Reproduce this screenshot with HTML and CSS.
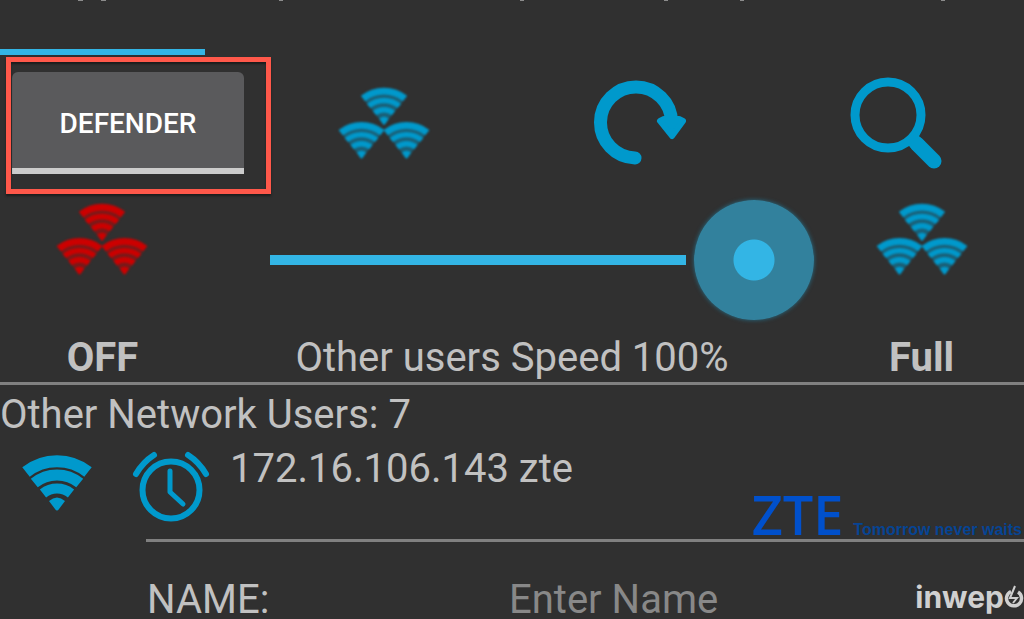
FILE: index.html
```html
<!DOCTYPE html>
<html lang="en">
<head>
<meta charset="utf-8">
<meta name="viewport" content="width=device-width, initial-scale=1">
<title>Network users</title>
<link rel="stylesheet" href="styles.css">
</head>
<body>
<svg class="defs" aria-hidden="true">
  <defs>
    <symbol id="wifi" viewBox="0 0 70 56">
      <g fill="none" stroke="currentColor">
        <path stroke-width="12" d="M4 17A50 50 0 0 1 66 17"/>
        <path stroke-width="11" d="M12.3 28A36 36 0 0 1 57.7 28"/>
        <path stroke-width="10" d="M21 38.5A22.5 22.5 0 0 1 49 38.5"/>
      </g>
      <path fill="currentColor" d="M27 46Q35 39 43 46L37 54Q35 57 33 54Z"/>
    </symbol>
    <symbol id="waves" viewBox="0 0 70 56">
      <g fill="none" stroke="currentColor">
        <path stroke-width="10" d="M4 17A50 50 0 0 1 66 17"/>
        <path stroke-width="8" d="M12.3 28A36 36 0 0 1 57.7 28"/>
        <path stroke-width="8" d="M21 38.5A22.5 22.5 0 0 1 49 38.5"/>
      </g>
      <path fill="currentColor" d="M28 47Q35 41 42 47L37 54Q35 57 33 54Z"/>
    </symbol>
    <symbol id="wedge" viewBox="0 0 70 56">
      <path fill="currentColor" d="M2 14Q35 -9 68 14L35 56Z"/>
    </symbol>
    <symbol id="trefoil" viewBox="0 0 92 74">
      <g opacity=".45">
        <use href="#wedge" x="22" y="1" width="48" height="38"/>
        <use href="#wedge" x="0" y="35" width="47" height="38"/>
        <use href="#wedge" x="45" y="35" width="47" height="38"/>
      </g>
      <use href="#waves" x="22" y="1" width="48" height="38"/>
      <use href="#waves" x="0" y="35" width="47" height="38"/>
      <use href="#waves" x="45" y="35" width="47" height="38"/>
    </symbol>
  </defs>
</svg>
<div class="app">
  <header class="tabs">
    <svg class="tab-edge" viewBox="0 0 1024 2" preserveAspectRatio="none" aria-hidden="true">
      <path stroke="#8c8c8c" stroke-width="2" d="M78 0h5M101 0h5M279 0h4M520 0h4M664 0h4M740 0h4M941 0h4"/>
    </svg>
    <div class="tab-indicator"></div>
  </header>

  <div class="toolbar">
    <div class="cell first">
      <button class="defender" type="button">DEFENDER</button>
      <span class="highlight"></span>
    </div>
    <button class="cell icon-btn" type="button" aria-label="Network">
      <svg class="trefoil"><use href="#trefoil"/></svg>
    </button>
    <button class="cell icon-btn" type="button" aria-label="Refresh">
      <svg class="tool" viewBox="0 0 92 92" fill="none" stroke="currentColor">
        <path stroke-width="13" stroke-linecap="round" d="M41 81A35.500 35.500 0 1 1 77.500 45"/>
        <path fill="currentColor" stroke-width="6" stroke-linejoin="round" d="M66 44L70 42L85 42L89 44L78 59Z"/>
      </svg>
    </button>
    <button class="cell icon-btn" type="button" aria-label="Search">
      <svg class="tool" viewBox="0 0 92 92" fill="none" stroke="currentColor">
        <circle cx="38" cy="38" r="33" stroke-width="9"/>
        <path stroke-width="15" stroke-linecap="round" d="M67 67L84 84"/>
        <path stroke-width="14" d="M61 61L70 70"/>
      </svg>
    </button>
  </div>

  <div class="speed">
    <div class="col">
      <svg class="trefoil red"><use href="#trefoil"/></svg>
      <strong class="caption">OFF</strong>
    </div>
    <div class="col">
      <input class="slider" id="speed" type="range" min="0" max="100" value="100">
      <label class="caption" for="speed">Other users Speed 100%</label>
    </div>
    <div class="col">
      <svg class="trefoil"><use href="#trefoil"/></svg>
      <strong class="caption">Full</strong>
    </div>
  </div>

  <h1 class="heading">Other Network Users: 7</h1>

  <div class="user">
    <svg class="wifi"><use href="#wifi"/></svg>
    <svg class="clock" viewBox="0 0 78 72" fill="none" stroke="currentColor" stroke-width="6">
      <circle cx="39" cy="39" r="28.500" stroke-width="6"/>
      <path stroke-width="5" stroke-linecap="round" stroke-linejoin="round" d="M38 20V41L51 53"/>
      <path stroke-linecap="round" d="M4 23Q11 11 22 4M56 4Q67 11 74 23"/>
    </svg>
    <div class="address">172.16.106.143 zte</div>
    <div class="vendor"><span class="zte">ZTE</span><span class="slogan">Tomorrow never waits</span></div>
  </div>

  <div class="name-row">
    <label for="name">NAME:</label>
    <input class="name" id="name" type="text" placeholder="Enter Name">
    <div class="brand">
      <span>inwep</span>
      <svg class="brand-o" viewBox="0 0 20 24" fill="none" stroke="currentColor">
        <path stroke-width="3.500" d="M7 6.500A7.500 7.500 0 1 0 14 7"/>
        <path stroke-width="2" d="M11 1L6 13H13L9 18"/>
      </svg>
    </div>
  </div>
</div>
</body>
</html>
```
FILE: styles.css
```css
* { box-sizing: border-box; }

body {
  margin: 0;
  background: #303030;
  color: #c1c1c1;
  font: 40px/48px Roboto, sans-serif;
}

button, input { font: inherit; }
svg { display: block; color: #0099cc; }
.defs { position: absolute; width: 0; height: 0; }

.tabs {
  display: flex;
  flex-direction: column;
  justify-content: space-between;
  height: 55px;
}
.tab-edge { width: 100%; height: 2px; }
.tab-indicator { width: 20%; height: 6px; background: #33b5e5; }

.toolbar {
  display: grid;
  grid-template-columns: repeat(4, 1fr);
  height: 139px;
}
.cell { position: relative; }
.first { padding: 17px 12px 20px; }
.defender {
  width: 100%;
  height: 102px;
  padding: 8px 0 0;
  border: 0;
  border-bottom: 6px solid #cccccc;
  border-radius: 6px 6px 0 0;
  background: #5a5a5c;
  color: #fff;
  font-size: 28px;
  font-weight: 500;
}
.highlight {
  position: absolute;
  inset: 2px -15px 0 6px;
  border: 5px solid #ff584a;
  box-shadow: 0 2px 2px #1c1c1c, inset 0 2px 2px #1c1c1c;
  pointer-events: none;
}
.icon-btn {
  display: flex;
  justify-content: center;
  padding: 22px 0 0;
  border: 0;
  background: none;
}
.trefoil { width: 92px; height: 74px; filter: blur(1px); }
.icon-btn .trefoil { margin-top: 9px; }
.tool { width: 92px; height: 92px; }
.red { color: #cc0000; }

.speed {
  display: grid;
  grid-template-columns: 1fr 3fr 1fr;
  height: 191px;
  padding-top: 4px;
  border-bottom: 3px solid #808080;
}
.col {
  display: flex;
  flex-direction: column;
  align-items: center;
  justify-content: space-between;
}
.col > .trefoil { margin-top: 4px; }
.slider {
  appearance: none;
  width: calc(100% - 10px);
  height: 124px;
  margin: 0;
  background: linear-gradient(#33b5e5, #33b5e5) 60px 57px / calc(100% - 188px) 10px no-repeat;
}
.slider::-webkit-slider-thumb {
  appearance: none;
  width: 120px;
  height: 120px;
  border-radius: 50%;
  background: radial-gradient(circle, #33b5e5 20px, #32819d 21px);
  box-shadow: 0 0 4px #246f8a;
}

.heading {
  margin: 0;
  padding-top: 6px;
  font-size: 40px;
  font-weight: 400;
}

.user {
  display: grid;
  grid-template-columns: 124px 84px auto 1fr;
  height: 103px;
  padding-left: 22px;
  padding-top: 6px;
  background: linear-gradient(#808080, #808080) 146px 100% / 100% 3px no-repeat;
}
.wifi { width: 70px; height: 56px; margin-top: 10px; }
.clock { width: 78px; height: 72px; margin: 6px 0 0 -14px; }
.vendor {
  display: flex;
  justify-content: flex-end;
  align-items: baseline;
  align-self: end;
  gap: 10px;
  padding: 0 2px 2px 0;
  white-space: nowrap;
}
.zte {
  color: #0050cc;
  font: 600 54px/48px "Open Sans", sans-serif;
}
.slogan {
  color: #064494;
  font: bold 16px/20px "Liberation Sans", sans-serif;
}

.name-row {
  display: grid;
  grid-template-columns: 362px 1fr auto;
  padding: 38px 0 0 147px;
  line-height: 40px;
}
.name {
  width: 100%;
  height: 38px;
  padding: 0;
  border: 0;
  outline: 0;
  background: none;
  color: #c1c1c1;
}
.name::placeholder { color: #888888; opacity: 1; }
.brand {
  display: flex;
  align-items: center;
  height: 34px;
  color: #d0d0d0;
  font: bold 30px/40px Inter, "Liberation Sans", sans-serif;
}
.brand-o { width: 20px; height: 24px; color: #d0d0d0; }
```
